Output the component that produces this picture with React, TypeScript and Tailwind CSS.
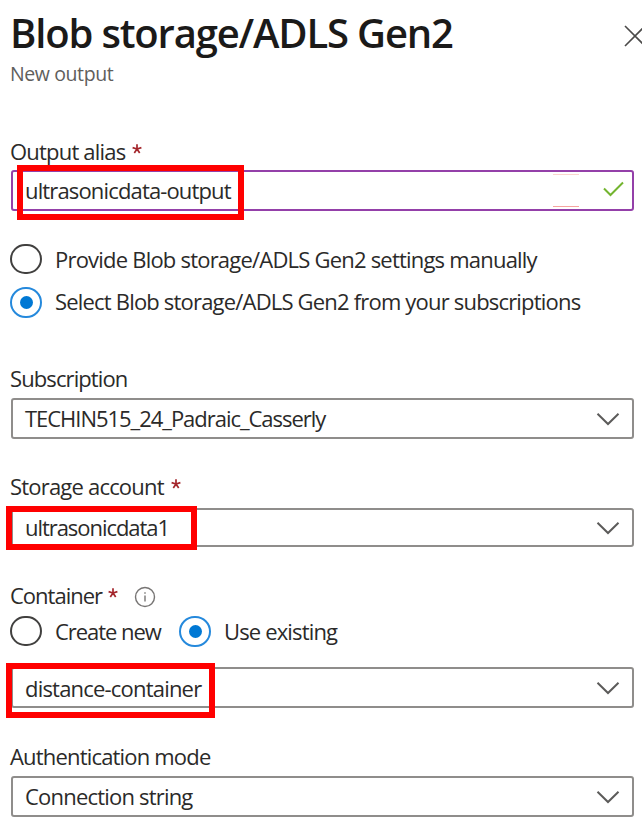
import type { ReactNode } from "react";

function Chevron() {
  return (
    <svg className="h-[14px] w-[24px] shrink-0" viewBox="0 0 24 14" fill="none" stroke="#5c5b5a" strokeWidth="2">
      <path d="M1.5 1.8 L12 12 L22.5 1.8" />
    </svg>
  );
}

function Highlight({ className }: { className: string }) {
  return <div className={`pointer-events-none absolute border-[6px] border-[#ff0000] ${className}`} />;
}

function Star({ className }: { className: string }) {
  return (
    <svg className={`mt-[8px] h-[10px] w-[10px] shrink-0 self-start ${className}`} viewBox="0 0 10 10" stroke="#a4262c" strokeWidth="1.7">
      <path d="M5 0.3V5M5 5L0.6 3.6M5 5L9.4 3.6M5 5L2.3 8.9M5 5L7.7 8.9" />
    </svg>
  );
}

function Label({ className, children }: { className: string; children: ReactNode }) {
  return <div className={`flex h-[30px] items-center leading-[30px] whitespace-nowrap ${className}`}>{children}</div>;
}

function Select({ className, textClass, value, children }: { className: string; textClass: string; value: string; children?: ReactNode }) {
  return (
    <div className={`relative ml-px flex w-[623px] items-center justify-between rounded-[3px] border-2 border-[#8f8d8b] pr-[12px] pl-[12px] ${className}`}>
      <span className={`leading-[30px] whitespace-nowrap ${textClass}`}>{value}</span>
      <Chevron />
      {children}
    </div>
  );
}

function Radio({ checked }: { checked?: boolean }) {
  return checked ? (
    <span className="flex h-[31px] w-[32px] shrink-0 items-center justify-center rounded-full border-2 border-[#2589dc]">
      <span className="h-[13px] w-[13px] rounded-full bg-[#0078d4]" />
    </span>
  ) : (
    <span className="h-[30px] w-[32px] shrink-0 rounded-full border-2 border-[#41403f]" />
  );
}

export default function App() {
  return (
    <main className="h-[829px] w-[642px] overflow-hidden bg-white pl-[10px] font-['Open_Sans','Noto_Sans',sans-serif] text-[22px] text-[#2b2a29]">
      <header className="flex h-[88px] items-start justify-between pt-[5px]">
        <div>
          <h1 className="h-[55px] text-[40px] leading-[56px] font-semibold tracking-[-1.17px] whitespace-nowrap text-[#1b1a19]">Blob storage/ADLS Gen2</h1>
          <p className="h-7 text-[19.5px] leading-7 tracking-[-0.4px] text-[#605e5c]">New output</p>
        </div>
        <svg className="mt-[20px] h-[22px] w-[18px] shrink-0" viewBox="0 0 18 22" stroke="#4b4a49" strokeWidth="1.6">
          <path d="M1 1L21 21M1 21L21 1" />
        </svg>
      </header>

      <Label className="mt-[48px]">
        <span className="tracking-[-0.8px]">Output alias</span>
        <Star className="ml-[7px]" />
      </Label>
      <div className="relative mt-[4px] ml-px flex h-[41px] w-[623px] items-center justify-between rounded-[3px] border-2 border-[#9440a9] pr-[8px] pl-[12px]">
        <span className="-mt-[2px] leading-[30px] tracking-[-0.85px] whitespace-nowrap">ultrasonicdata-output</span>
        <svg className="-mt-1 h-[16px] w-[21px]" viewBox="0 0 21 16" fill="none" stroke="#73b42f" strokeWidth="2">
          <path d="M1 7.5L7.5 14L20 1.5" />
        </svg>
        <div className="absolute top-[2px] right-[53px] h-[33px] w-[26px] border-t border-b border-t-[#fbd5ce] border-b-[#f6a5a0]" />
        <Highlight className="top-[-7px] left-[4px] h-[55px] w-[227px]" />
      </div>

      <div className="mt-[33px] flex h-[30px] items-center">
        <Radio />
        <span className="ml-[13px] leading-[30px] tracking-[-0.79px] whitespace-nowrap">Provide Blob storage/ADLS Gen2 settings manually</span>
      </div>
      <div className="mt-[13px] flex h-[30px] items-center">
        <Radio checked />
        <span className="-mt-[2px] ml-[13px] leading-[30px] tracking-[-0.81px] whitespace-nowrap">Select Blob storage/ADLS Gen2 from your subscriptions</span>
      </div>

      <Label className="mt-[46px]">
        <span className="tracking-[-0.9px]">Subscription</span>
      </Label>
      <Select className="mt-[5px] h-[41px]" textClass="-mt-[2px] tracking-[-1.03px]" value="TECHIN515_24_Padraic_Casserly" />

      <Label className="mt-[32px]">
        <span className="tracking-[-0.8px]">Storage account</span>
        <Star className="ml-[7px]" />
      </Label>
      <Select className="mt-[7px] h-[39px]" textClass="-mt-[2px] tracking-[-1.05px]" value="ultrasonicdata1">
        <Highlight className="top-[-4px] left-[-7px] h-[44px] w-[191px]" />
      </Select>

      <Label className="mt-[33px]">
        <span className="tracking-[-1px]">Container</span>
        <Star className="ml-[6px]" />
        <svg className="mt-[3px] ml-[16px] h-[22px] w-[22px]" viewBox="0 0 22 22" fill="none" stroke="#777574" strokeWidth="1.4">
          <circle cx="11" cy="11" r="9.5" />
          <path d="M11 9.5V15.5M11 6.3V7.8" />
        </svg>
      </Label>
      <div className="mt-[6px] flex h-[30px] items-center">
        <Radio />
        <span className="ml-[13px] w-[124px] leading-[30px] tracking-[-1.05px] whitespace-nowrap">Create new</span>
        <Radio checked />
        <span className="ml-[13px] leading-[30px] tracking-[-0.85px] whitespace-nowrap">Use existing</span>
      </div>
      <Select className="mt-[21px] h-[41px]" textClass="tracking-[-0.8px]" value="distance-container">
        <Highlight className="top-[-6px] left-[-7px] h-[55px] w-[209px]" />
      </Select>

      <Label className="mt-[33px]">
        <span className="tracking-[-0.82px]">Authentication mode</span>
      </Label>
      <Select className="mt-[5px] h-[41px]" textClass="-mt-[2px] tracking-[-0.8px]" value="Connection string" />
    </main>
  );
}
